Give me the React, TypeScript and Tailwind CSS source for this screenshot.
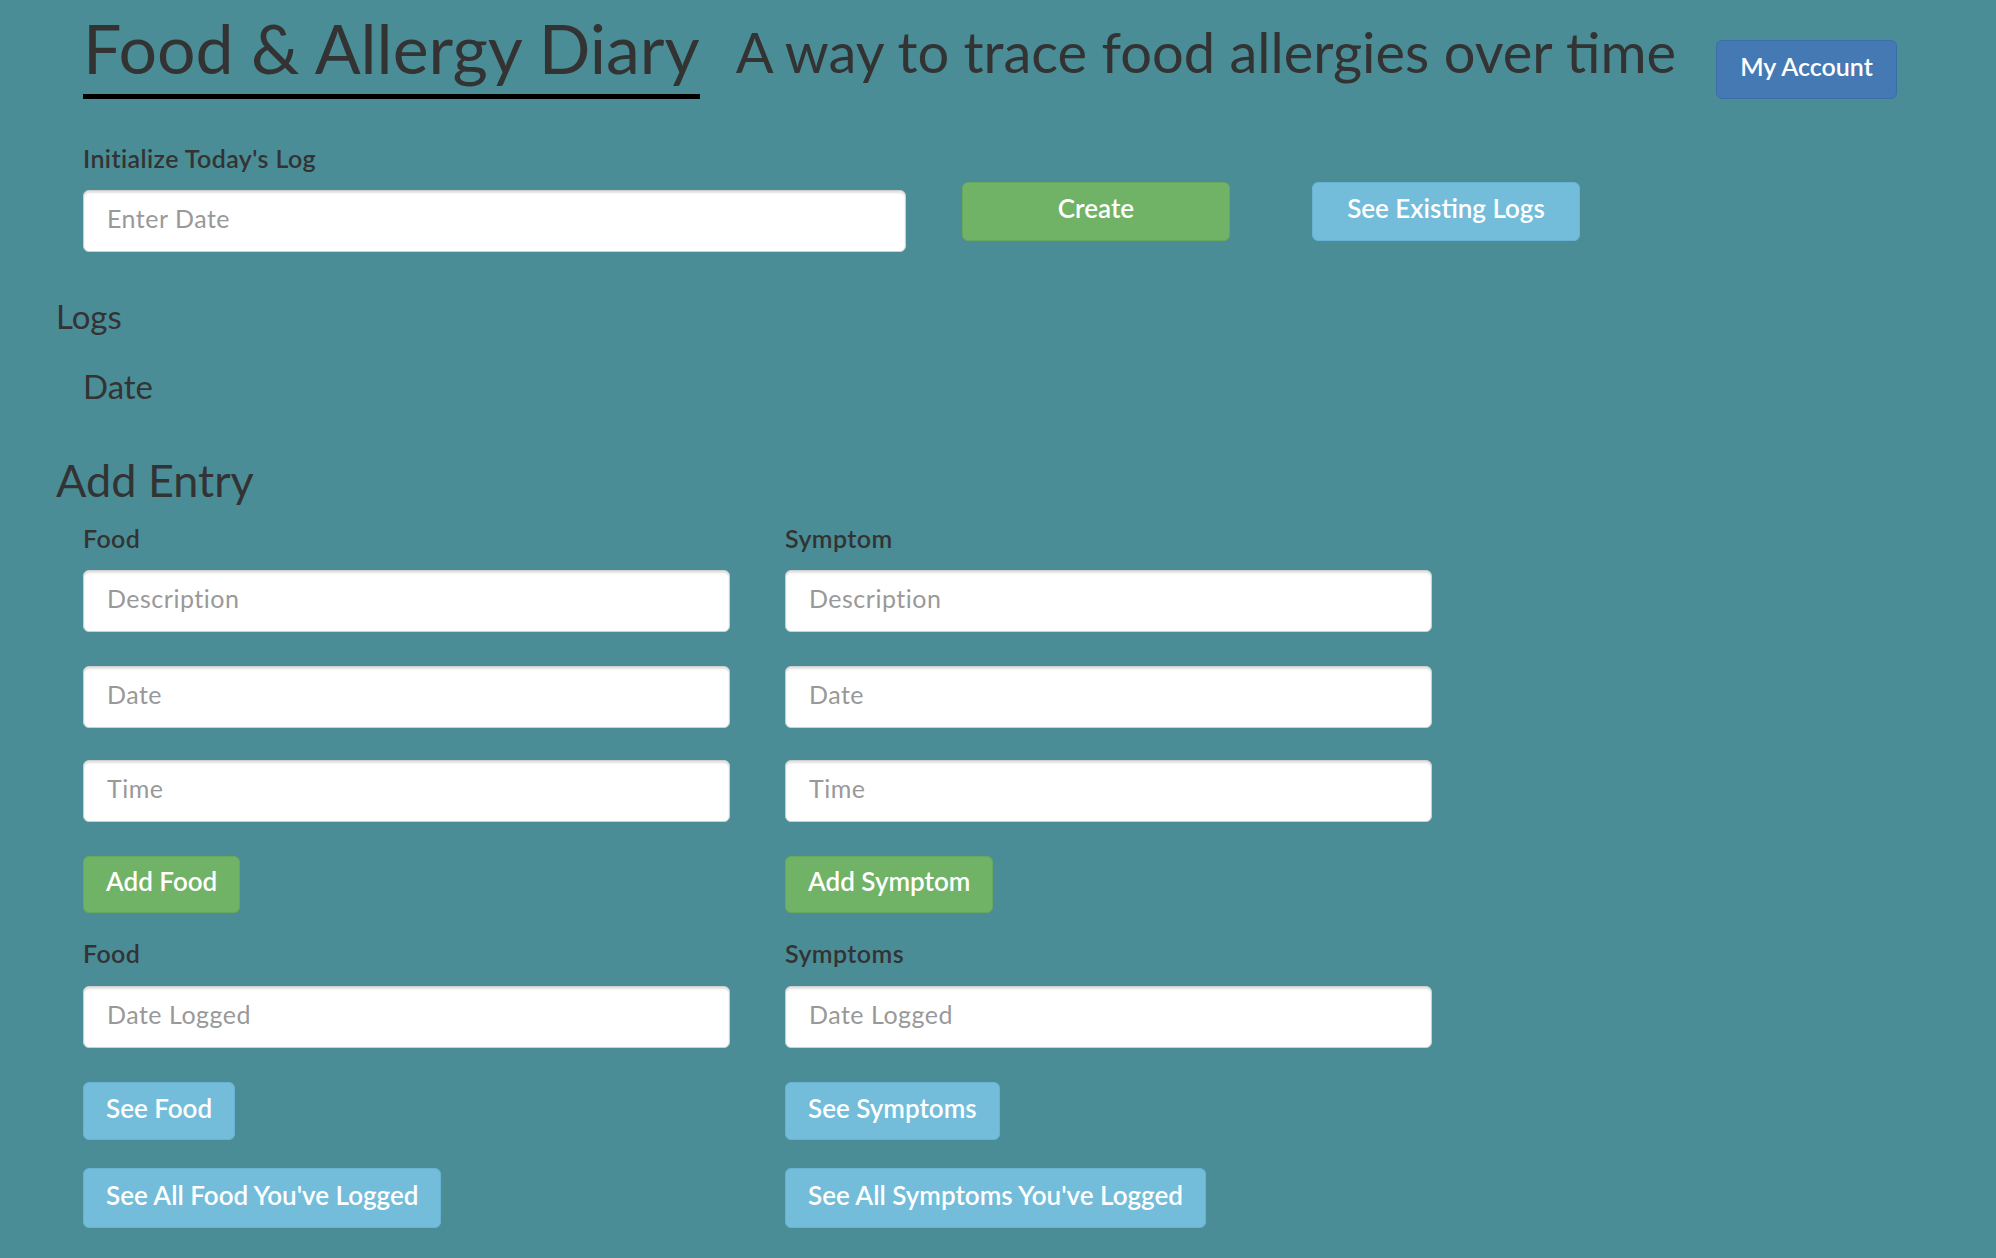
import React from "react";

const inputCls =
  "block w-full h-[62px] bg-white border border-[#cfcfcf] rounded-[6px] shadow-[inset_0_2px_2px_rgba(0,0,0,0.12)] pl-[23px] pb-[6px] text-[25px] tracking-[0.5px] text-[#555] placeholder:text-[#999] outline-none font-['Lato',sans-serif]";

const greenBtn =
  "bg-[#71b366] border border-[#67a95c] rounded-[6px] text-white text-[26px] font-semibold leading-none pb-[7px]";
const blueBtn =
  "bg-[#73bddb] border border-[#67b3d4] rounded-[6px] text-white text-[26px] font-semibold leading-none pb-[7px]";

const labelCls = "text-[25px] leading-none font-semibold tracking-[0.4px]";

function Column({
  title,
  addLabel,
  listTitle,
  seeLabel,
  seeAllLabel,
}: {
  title: string;
  addLabel: string;
  listTitle: string;
  seeLabel: string;
  seeAllLabel: string;
}) {
  return (
    <div className="w-[647px] flex flex-col items-start">
      <div className={labelCls}>{title}</div>
      <input className={inputCls + " mt-[19px]"} placeholder="Description" />
      <input className={inputCls + " mt-[34px]"} placeholder="Date" />
      <input className={inputCls + " mt-[32px]"} placeholder="Time" />
      <button className={greenBtn + " mt-[34px] h-[57px] px-[22px]"}>{addLabel}</button>
      <div className={labelCls + " mt-[28px]"}>{listTitle}</div>
      <input className={inputCls + " mt-[20px]"} placeholder="Date Logged" />
      <button className={blueBtn + " mt-[34px] h-[58px] px-[22px]"}>{seeLabel}</button>
      <button className={blueBtn + " mt-[28px] h-[60px] px-[22px]"}>{seeAllLabel}</button>
    </div>
  );
}

export default function App() {
  return (
    <div className="min-h-[1258px] w-full bg-[#4a8d97] text-[#333] font-['Lato',sans-serif] pl-[56px]">
      {/* Header */}
      <div className="flex items-start pt-[14px] pl-[27px]">
        <h1 className="text-[68px] leading-none font-normal pb-[12px] border-b-[5px] border-black">
          Food &amp; Allergy Diary
        </h1>
        <h2 className="text-[56px] leading-none font-normal ml-[36px] mt-[10px]">
          A way to trace food allergies over time
        </h2>
        <button className="ml-[40px] mt-[26px] w-[181px] h-[59px] pb-[7px] bg-[#4579b3] border border-[#3b6ea6] rounded-[6px] text-white text-[25px] font-semibold leading-none">
          My Account
        </button>
      </div>

      {/* Initialize */}
      <div className="flex items-start pl-[27px] mt-[47px]">
        <div className="w-[823px]">
          <div className={labelCls}>Initialize Today's Log</div>
          <input className={inputCls + " mt-[19px]"} placeholder="Enter Date" />
        </div>
        <button className={greenBtn + " ml-[56px] mt-[36px] w-[268px] h-[59px]"}>Create</button>
        <button className={blueBtn + " ml-[82px] mt-[36px] w-[268px] h-[59px]"}>See Existing Logs</button>
      </div>

      <h3 className="text-[33px] leading-none font-normal mt-[48px]">Logs</h3>
      <div className="text-[33px] leading-none font-normal mt-[37px] pl-[27px]">Date</div>

      <h3 className="text-[45px] leading-none font-normal mt-[55px]">Add Entry</h3>

      <div className="flex gap-[55px] pl-[27px] mt-[23px]">
        <Column
          title="Food"
          addLabel="Add Food"
          listTitle="Food"
          seeLabel="See Food"
          seeAllLabel="See All Food You've Logged"
        />
        <Column
          title="Symptom"
          addLabel="Add Symptom"
          listTitle="Symptoms"
          seeLabel="See Symptoms"
          seeAllLabel="See All Symptoms You've Logged"
        />
      </div>
    </div>
  );
}
